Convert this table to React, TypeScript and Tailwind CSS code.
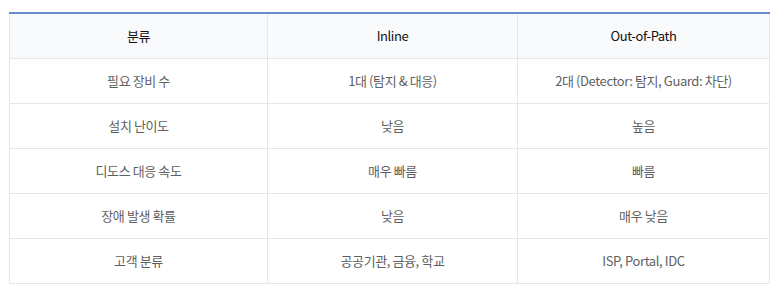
import React from 'react';

const rows: [string, string, string][] = [
  ['필요 장비 수', '1대 (탐지 & 대응)', '2대 (Detector: 탐지, Guard: 차단)'],
  ['설치 난이도', '낮음', '높음'],
  ['디도스 대응 속도', '매우 빠름', '빠름'],
  ['장애 발생 확률', '낮음', '매우 낮음'],
  ['고객 분류', '공공기관, 금융, 학교', 'ISP, Portal, IDC'],
];

export default function App() {
  return (
    <div className="w-[776px] h-[297px] bg-white pt-3 pl-[9px] font-['Noto_Sans_CJK_KR',sans-serif]">
      <table className="w-[760px] table-fixed border-collapse text-[13px]">
        <colgroup>
          <col className="w-[258px]" />
          <col className="w-[250px]" />
          <col className="w-[252px]" />
        </colgroup>
        <thead>
          <tr className="h-[45px] bg-[#f9fafc] border-t-2 border-t-[#6a8fc8]">
            <th className="border-x border-b border-[#e6e6e6] font-normal text-[#111] tracking-[-0.4px]">분류</th>
            <th className="border-x border-b border-[#e6e6e6] font-normal text-[#111] tracking-[-0.4px]">Inline</th>
            <th className="border-x border-b border-[#e6e6e6] font-normal text-[#111] tracking-[-0.4px]">Out-of-Path</th>
          </tr>
        </thead>
        <tbody>
          {rows.map((r, i) => (
            <tr key={i} className="h-[45px]">
              {r.map((c, j) => (
                <td key={j} className="border border-[#e6e6e6] text-center text-[#5f5f5f] tracking-[-0.4px]">
                  {c}
                </td>
              ))}
            </tr>
          ))}
        </tbody>
      </table>
    </div>
  );
}
